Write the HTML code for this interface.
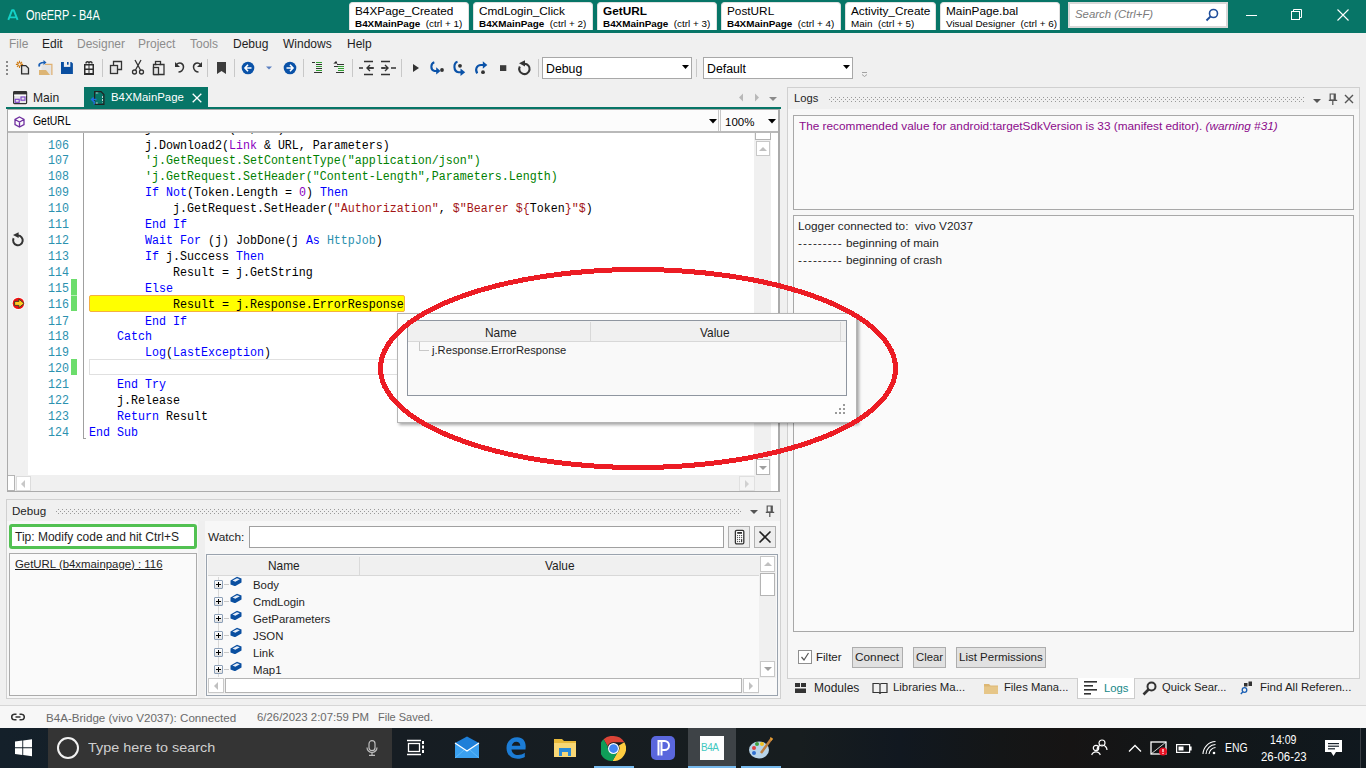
<!DOCTYPE html>
<html><head><meta charset="utf-8">
<style>
*{box-sizing:border-box}
body{margin:0;width:1366px;height:768px;position:relative;overflow:hidden;background:#F0F0F0;font-family:"Liberation Sans",sans-serif;font-size:12px;color:#000}
.a{position:absolute}
.t{position:absolute;white-space:nowrap;line-height:1}
#title{left:0;top:0;width:1366px;height:33px;background:#077567}
.dtab{position:absolute;top:2px;height:28px;background:#fff;border-radius:4px 4px 0 0;border:1px solid #E0E0E0;border-bottom:none}
.dtab .l1{position:absolute;left:5px;top:1.2px;font-size:11.8px;white-space:nowrap;color:#000}
.dtab .l2{position:absolute;left:5px;top:15.2px;font-size:9.9px;white-space:nowrap;color:#000}
.dtab .l2 b{font-weight:bold}
.code{position:absolute;font-family:"Liberation Mono",monospace;font-size:11.667px;white-space:pre;line-height:14.5454px;transform:scaleY(1.1);transform-origin:0 0}
.kw{color:#0000FF}
.cm{color:#008000}
.st{color:#A31515}
.pu{color:#8B00C0}
.ty{color:#2B91AF}
.ln{position:absolute;white-space:pre;left:28px;width:40px;text-align:right;font-family:"Liberation Mono",monospace;font-size:11.667px;line-height:14.5454px;color:#2B91AF;transform:scaleY(1.1);transform-origin:0 0}
</style></head>
<body>
<svg width="0" height="0" style="position:absolute"><defs><pattern id="dots" x="0" y="0" width="4" height="4" patternUnits="userSpaceOnUse"><rect x="2" y="0" width="1" height="1" fill="#9A9A9A"/><rect x="0" y="2" width="1" height="1" fill="#9A9A9A"/></pattern></defs></svg>
<!-- TITLE BAR -->
<div id="title" class="a">
  <svg class="a" style="left:7px;top:9px" width="12" height="12" viewBox="0 0 12 12"><path d="M1.3 10.9L5.1 1.2h1.6l3.9 9.7M3.1 8.4h5.6" fill="none" stroke="#14D2C8" stroke-width="1.9" stroke-linejoin="round"/></svg>
  <div class="t" style="left:26px;top:8.2px;font-size:14px;color:#fff;transform:scaleX(0.785);transform-origin:0 0">OneERP - B4A</div>
  <div class="dtab" style="left:349px;width:120px"><div class="l1">B4XPage_Created</div><div class="l2"><b>B4XMainPage</b>&nbsp; (ctrl + 1)</div></div>
  <div class="dtab" style="left:473px;width:120px"><div class="l1">CmdLogin_Click</div><div class="l2"><b>B4XMainPage</b>&nbsp; (ctrl + 2)</div></div>
  <div class="dtab" style="left:597px;width:120px"><div class="l1" style="font-weight:bold">GetURL</div><div class="l2"><b>B4XMainPage</b>&nbsp; (ctrl + 3)</div></div>
  <div class="dtab" style="left:721px;width:120px"><div class="l1">PostURL</div><div class="l2"><b>B4XMainPage</b>&nbsp; (ctrl + 4)</div></div>
  <div class="dtab" style="left:845px;width:91px"><div class="l1">Activity_Create</div><div class="l2">Main&nbsp; (ctrl + 5)</div></div>
  <div class="dtab" style="left:940px;width:120px"><div class="l1">MainPage.bal</div><div class="l2">Visual Designer&nbsp; (ctrl + 6)</div></div>
  <div class="a" style="left:1068px;top:2px;width:160px;height:26px;background:#fff;border:2px solid #D8D8D8"></div>
  <div class="t" style="left:1075px;top:9px;font-size:11.4px;font-style:italic;color:#7A7A7A">Search (Ctrl+F)</div>
  <svg class="a" style="left:1205px;top:8px" width="14" height="14" viewBox="0 0 14 14"><circle cx="8.5" cy="5.5" r="4" fill="none" stroke="#1F4E9C" stroke-width="1.6"/><line x1="5.6" y1="8.4" x2="1.5" y2="12.5" stroke="#1F4E9C" stroke-width="2"/></svg>
  <div class="a" style="left:1246px;top:15px;width:11px;height:1px;background:#fff"></div>
  <svg class="a" style="left:1291px;top:9px" width="12" height="12" viewBox="0 0 12 12"><rect x="0.5" y="2.5" width="8" height="8" fill="none" stroke="#fff"/><path d="M2.5 2.5V0.5H10.5V8.5H8.5" fill="none" stroke="#fff"/></svg>
  <svg class="a" style="left:1337px;top:9px" width="12" height="12" viewBox="0 0 12 12"><path d="M0.5 0.5L11.5 11.5M11.5 0.5L0.5 11.5" stroke="#fff" stroke-width="1.1"/></svg>
</div>
<!--MENU-->
<div class="t" style="left:9px;top:38px;font-size:12px;color:#8C8C8C">File</div>
<div class="t" style="left:42px;top:38px;font-size:12px;color:#1E1E1E">Edit</div>
<div class="t" style="left:77px;top:38px;font-size:12px;color:#8C8C8C">Designer</div>
<div class="t" style="left:138px;top:38px;font-size:12px;color:#8C8C8C">Project</div>
<div class="t" style="left:190px;top:38px;font-size:12px;color:#8C8C8C">Tools</div>
<div class="t" style="left:233px;top:38px;font-size:12px;color:#1E1E1E">Debug</div>
<div class="t" style="left:283px;top:38px;font-size:12px;color:#1E1E1E">Windows</div>
<div class="t" style="left:347px;top:38px;font-size:12px;color:#1E1E1E">Help</div>
<!--TOOLBAR-->
<svg class="a" style="left:0;top:55px" width="880" height="28" viewBox="0 0 880 28">
 <g fill="#8A8A8A"><rect x="6" y="6" width="2" height="2"/><rect x="6" y="10" width="2" height="2"/><rect x="6" y="14" width="2" height="2"/><rect x="6" y="18" width="2" height="2"/></g>
 <!-- new -->
 <g stroke="#D07A10" stroke-width="1.1"><path d="M19.5 5.8v7.2M15.9 9.4h7.2M17 6.9l5 5M22 6.9l-5 5"/></g><circle cx="19.5" cy="9.4" r="1.6" fill="#F0F0F0" stroke="#D07A10" stroke-width="1"/>
 <path d="M21.6 10.6h4.2l2.7 2.7v5.6h-6.9z" fill="#E6E6E6" stroke="#2E2E2E" stroke-width="1.3"/>
 <!-- open -->
 <path d="M41.5 9h10.5v11H41.5z" fill="#E4E4E4"/><path d="M45 9.3h6.9v10.7" fill="none" stroke="#E0B070" stroke-width="1.2"/>
 <path d="M39 15h7l4 5H39z" fill="#DDB575"/>
 <path d="M39.6 11.5c-1.5-2.5 1-4 4.5-4" fill="none" stroke="#1A5FB4" stroke-width="1.7"/><path d="M43.5 5l3 2.5-3 2.5z" fill="#1A5FB4"/>
 <!-- save -->
 <path d="M61 6.9h10.3l1.6 1.6v10.4H61z" fill="#0A4EA0"/><rect x="63.9" y="6.9" width="6.4" height="5" fill="#F0F0F0"/><rect x="67" y="7" width="1.6" height="2.7" fill="#0A4EA0"/>
 <!-- gift -->
 <path d="M86 8.5c0-2.5 3-2.5 3 0M89 8.5c0-2.5 3-2.5 3 0" fill="none" stroke="#333" stroke-width="1.5"/>
 <rect x="84" y="9" width="10" height="11" fill="#2E2E2E"/><g fill="#F4F4F4"><rect x="85.5" y="10.5" width="3" height="3"/><rect x="89.5" y="10.5" width="3" height="3"/><rect x="85.5" y="15" width="3" height="3"/><rect x="89.5" y="15" width="3" height="3"/></g>
 <rect x="102" y="4" width="1" height="18" fill="#C8C8C8"/>
 <!-- copy -->
 <g fill="none" stroke="#333" stroke-width="1.3"><rect x="110.5" y="10.5" width="7" height="8" fill="#E4E4E4"/><path d="M113.5 10.5v-4h8v8h-4"/></g>
 <!-- cut -->
 <g fill="none" stroke="#333" stroke-width="1.3"><circle cx="134.5" cy="17" r="2"/><circle cx="141.5" cy="17" r="2"/><path d="M135.5 15L141 5M140.5 15L135 5"/></g>
 <!-- paste -->
 <g fill="none" stroke="#333" stroke-width="1.3"><path d="M153.5 19.5v-10h3M159.5 9.5h4.5v10h-10.5"/><rect x="155.5" y="6.5" width="5" height="3"/><rect x="153.5" y="12.5" width="5" height="7" fill="#E4E4E4"/></g>
 <!-- undo/redo -->
 <path d="M176.5 9.5c3-3 7-1 7 2.5s-3 5-5 5" fill="none" stroke="#333" stroke-width="1.5"/><path d="M175 7v5h5z" fill="#333"/>
 <path d="M200.5 9.5c-3-3-7-1-7 2.5s3 5 5 5" fill="none" stroke="#333" stroke-width="1.5"/><path d="M202 7v5h-5z" fill="#333"/>
 <rect x="207" y="4" width="1" height="18" fill="#C8C8C8"/>
 <!-- bookmark -->
 <path d="M217 7h9v12l-4.5-3-4.5 3z" fill="#3C3C3C"/>
 <rect x="234" y="4" width="1" height="18" fill="#C8C8C8"/>
 <!-- back -->
 <circle cx="248" cy="13" r="6.3" fill="#0A52A8"/><path d="M251.5 13h-6M248 9.8l-3 3.2 3 3.2" fill="none" stroke="#fff" stroke-width="1.6"/>
 <path d="M266 11.5h6l-3 3z" fill="#5A7FC0"/>
 <circle cx="290" cy="13" r="6.3" fill="#0A52A8"/><path d="M286.5 13h6M290 9.8l3 3.2-3 3.2" fill="none" stroke="#fff" stroke-width="1.6"/>
 <rect x="303" y="4" width="1" height="18" fill="#C8C8C8"/>
 <!-- comment -->
 <g stroke="#333" stroke-width="1"><path d="M312 7.5h3M316 9.5h6M316 13.5h6M314 17.5h8"/></g><g stroke="#30A030"><path d="M316 7.5h6M316 11.5h6M316 15.5h6"/></g>
 <g stroke="#333" stroke-width="1"><path d="M334 8.5l2-2 1 2M334 11.5h5M337 9.5h7M336 17.5h8"/></g><g stroke="#30A030"><path d="M338 11.5h6M338 13.5h6M338 15.5h6"/></g>
 <rect x="352" y="4" width="1" height="18" fill="#C8C8C8"/>
 <!-- outdent/indent -->
 <g stroke="#333" stroke-width="1.4"><path d="M364 6.5h9M359 13h4M369 13h5M364 19.5h9"/></g><path d="M370 10l-3 3 3 3M367 13h6" fill="none" stroke="#333" stroke-width="1.4"/>
 <g stroke="#333" stroke-width="1.4"><path d="M381 6.5h9M381 13h4M391 13h5M381 19.5h9"/></g><path d="M385 10l3 3-3 3M382 13h6" fill="none" stroke="#333" stroke-width="1.4"/>
 <rect x="401" y="4" width="1" height="18" fill="#C8C8C8"/>
 <!-- play -->
 <path d="M413 9l6 4-6 4z" fill="#333"/>
 <!-- step into -->
 <path d="M434.3 7.3C430.5 8.5 430.2 14.8 434.5 16H438.5" fill="none" stroke="#0A52A8" stroke-width="2.1"/><path d="M436.2 12.3L440.5 16L436.2 19.6z" fill="#0A52A8"/><circle cx="442" cy="15" r="1.9" fill="#333"/>
 <!-- step over -->
 <circle cx="460" cy="10.8" r="1.9" fill="#333"/><path d="M457.5 6.8C453.3 8 453.2 16.3 458.5 17.2H461.5" fill="none" stroke="#0A52A8" stroke-width="2.1"/><path d="M460.5 13.5L465.2 17.2L460.5 21z" fill="#0A52A8"/>
 <!-- step out -->
 <path d="M477.3 18.3C474.8 15 476.5 10 481 10H484" fill="none" stroke="#0A52A8" stroke-width="2.1"/><path d="M482.8 6.3L487.3 10L482.8 13.7z" fill="#0A52A8"/><circle cx="483" cy="17.2" r="1.9" fill="#333"/>
 <!-- stop -->
 <rect x="500" y="10.2" width="6.3" height="5.8" fill="#3A3A3A"/>
 <!-- restart -->
 <path d="M524.5 8.7A5.2 5.2 0 1 1 519.8 11.5" fill="none" stroke="#333" stroke-width="2.1"/><path d="M519 8.3L525 5.3V11.4z" fill="#333"/>
 <rect x="538" y="4" width="1" height="18" fill="#C8C8C8"/>
 <rect x="696" y="4" width="1" height="18" fill="#C8C8C8"/>
 <path d="M862 17.5h5M862 19.5l2.5 2 2.5-2" fill="none" stroke="#999" stroke-width="0.9"/>
</svg>
<div class="a" style="left:542px;top:57px;width:150px;height:22px;background:#fff;border:1px solid #A8A8A8"></div>
<div class="t" style="left:546px;top:62.5px;font-size:12.3px;color:#000">Debug</div>
<svg class="a" style="left:682px;top:65px" width="7" height="4"><path d="M0 0h7l-3.5 4z" fill="#000"/></svg>
<div class="a" style="left:703px;top:57px;width:150px;height:22px;background:#fff;border:1px solid #A8A8A8"></div>
<div class="t" style="left:707px;top:62.5px;font-size:12.3px;color:#000">Default</div>
<svg class="a" style="left:843px;top:65px" width="7" height="4"><path d="M0 0h7l-3.5 4z" fill="#000"/></svg>
<!--DOCTABS-->
<svg class="a" style="left:13px;top:91px" width="15" height="14" viewBox="0 0 15 14"><rect x="0.6" y="0.6" width="13" height="12" rx="0.8" fill="#E8E8E8" stroke="#333" stroke-width="1.2"/><rect x="1" y="1" width="12.2" height="2.6" fill="#333"/><rect x="1.2" y="3.6" width="12" height="1.2" fill="#fff"/><rect x="2.2" y="8.3" width="4" height="3" fill="none" stroke="#7A3EC8" stroke-width="1.1"/><rect x="8" y="6" width="4" height="3.2" fill="none" stroke="#7A3EC8" stroke-width="1.1"/></svg>
<div class="t" style="left:33px;top:92px;font-size:12.1px;color:#1E1E1E">Main</div>
<div class="a" style="left:84px;top:87px;width:124px;height:21px;background:#077567"></div>
<svg class="a" style="left:90px;top:91px" width="16" height="15" viewBox="0 0 16 15"><path d="M4.6 0.6h6.4l2.9 2.9v9.9H4.6z" fill="none" stroke="#222" stroke-width="1.2"/><path d="M5.8 2H9M12.5 5v6.5M5.8 12H8" fill="none" stroke="#CFE0DC" stroke-width="0.9" stroke-dasharray="2 1"/><path d="M6.5 8.5H1.8M3.6 6.5L1.5 8.5 3.6 10.5M4.2 10v3.5" fill="none" stroke="#1E6FE0" stroke-width="1.4"/></svg>
<div class="t" style="left:111px;top:92px;font-size:11.4px;color:#fff">B4XMainPage</div>
<svg class="a" style="left:192px;top:93px" width="10" height="10" viewBox="0 0 10 10"><path d="M0.7 0.7L9.3 9.3M9.3 0.7L0.7 9.3" stroke="#fff" stroke-width="1.3"/></svg>
<svg class="a" style="left:738px;top:92px" width="42" height="12" viewBox="0 0 42 12"><path d="M5 1.5v8l-4-4z" fill="#B8B8B8"/><path d="M17 1.5v8l4-4z" fill="#B8B8B8"/><path d="M31 5h8l-4 4z" fill="#8A8A8A"/></svg>
<div class="a" style="left:6px;top:107px;width:775px;height:2px;background:#077567"></div>
<!--EDITOR-->
<div class="a" style="left:7px;top:109px;width:773px;height:383px;background:#fff;border:1px solid #ABABAB;border-width:1px 2px 1px 1px;overflow:hidden">
 <div class="a" style="left:0;top:0;width:771px;height:23px;background:#FCFCFC;border-bottom:2px solid #B9B9B9"></div>
 <div class="a" style="left:710px;top:0;width:1px;height:21px;background:#C8C8C8"></div><div class="a" style="left:712px;top:0;width:1px;height:21px;background:#C8C8C8"></div>
 <svg class="a" style="left:6px;top:6px" width="11" height="12" viewBox="0 0 11 12"><path d="M5.5 1L10 3.5v5L5.5 11 1 8.5v-5z M1 3.5l4.5 2.5 4.5-2.5 M5.5 6v5" fill="none" stroke="#7030A0" stroke-width="1.3"/></svg>
 <div class="t" style="left:25px;top:4.8px;font-size:12px;transform:scaleX(0.87);transform-origin:0 0;color:#000">GetURL</div>
 <svg class="a" style="left:701px;top:9px" width="8" height="5"><path d="M0 0h8l-4 4.5z" fill="#000"/></svg>
 <div class="t" style="left:717px;top:7px;font-size:11.5px;color:#000">100%</div>
 <svg class="a" style="left:760px;top:9px" width="8" height="5"><path d="M0 0h8l-4 4.5z" fill="#000"/></svg>
 <div class="a" style="left:0;top:23px;width:771px;height:342px;overflow:hidden">
  <div class="a" style="left:0;top:0;width:20px;height:342px;background:#F0F0F0"></div>
  <div class="a" style="left:75px;top:0;width:1px;height:306px;background:#A0A0A0"></div>
  <div class="a" style="left:75px;top:305px;width:3px;height:1px;background:#A0A0A0"></div>
  <div class="a" style="left:63px;top:146px;width:6px;height:32px;background:#6CDD6C"></div>
  <div class="a" style="left:63px;top:162px;width:6px;height:1px;background:#B8F0B8"></div>
  <div class="a" style="left:63px;top:226px;width:6px;height:16px;background:#6CDD6C"></div>
  <div class="a" style="left:81px;top:162px;width:316px;height:17px;background:#FFFF00;border:1px solid #F5B040;border-radius:2px"></div>
  <div class="a" style="left:81px;top:226px;width:664px;height:16px;border:1px solid #E0E0E0"></div>
  <div class="ln" style="left:0;width:61px;top:-12px">105
106
107
108
109
110
111
112
113
114
115
116
117
118
119
120
121
122
123
124</div>
  <div class="code" style="left:81px;top:-12px">        j.Initialize("", Me)
        j.Download2(<span class="pu">Link</span> &amp; URL, Parameters)
        <span class="cm">'j.GetRequest.SetContentType("application/json")</span>
        <span class="cm">'j.GetRequest.SetHeader("Content-Length",Parameters.Length)</span>
        <span class="kw">If</span> <span class="kw">Not</span>(Token.Length = <span class="pu">0</span>) <span class="kw">Then</span>
            j.GetRequest.SetHeader(<span class="st">"Authorization"</span>, <span class="st">$"Bearer ${</span>Token<span class="st">}"$</span>)
        <span class="kw">End If</span>
        <span class="kw">Wait For</span> (j) JobDone(j <span class="kw">As</span> <span class="ty">HttpJob</span>)
        <span class="kw">If</span> j.Success <span class="kw">Then</span>
            Result = j.GetString
        <span class="kw">Else</span>
            Result = j.Response.ErrorResponse
        <span class="kw">End If</span>
    <span class="kw">Catch</span>
        <span class="kw">Log</span>(<span class="kw">LastException</span>)

    <span class="kw">End Try</span>
    j.Release
    <span class="kw">Return</span> Result
<span class="kw">End Sub</span></div>
  <svg class="a" style="left:3px;top:99px" width="14" height="15" viewBox="0 0 14 15"><path d="M7 3.6A4.8 4.8 0 1 1 2.6 6.3" fill="none" stroke="#333" stroke-width="2"/><path d="M2 3.1L7.6 0.2V6z" fill="#333"/></svg>
  <svg class="a" style="left:4px;top:163px" width="15" height="15" viewBox="0 0 15 15"><circle cx="6.4" cy="7.4" r="6.4" fill="#FFFFFF"/><circle cx="6.4" cy="7.4" r="5.7" fill="#EE1111"/><path d="M2.6 5.4h4.3v-2.3l5.2 4.3-5.2 4.3v-2.3H2.6z" fill="#FFCC22" stroke="#3A3A2A" stroke-width="0.9"/></svg>
  <div class="a" style="left:746px;top:0;width:17px;height:342px;background:#F0F0F0"></div>
  <div class="a" style="left:747px;top:0;width:16px;height:7px;background:#fff;border:1px solid #B4B4B4;border-top:none"></div>
  <div class="a" style="left:748px;top:8px;width:14px;height:15px;background:#fff;border:1px solid #C8C8C8"></div>
  <svg class="a" style="left:750px;top:13px" width="10" height="6"><path d="M1 5h8l-4-4z" fill="#C0C0C0"/></svg>
  <div class="a" style="left:748px;top:326px;width:14px;height:16px;background:#fff;border:1px solid #B4B4B4"></div>
  <svg class="a" style="left:750px;top:332px" width="10" height="6"><path d="M1 1h8l-4 4z" fill="#A0A0A0"/></svg>
 </div>
 <div class="a" style="left:0;top:365px;width:763px;height:16px;background:#F0F0F0"></div>
 <div class="a" style="left:0;top:365px;width:7px;height:16px;background:#fff;border:1px solid #B4B4B4;border-left:none"></div>
 <div class="a" style="left:8px;top:366px;width:15px;height:15px;background:#fff;border:1px solid #DCDCDC"></div>
 <svg class="a" style="left:12px;top:370px" width="6" height="8"><path d="M5 0v8l-4-4z" fill="#C8C8C8"/></svg>
 <div class="a" style="left:731px;top:366px;width:16px;height:15px;background:#F4F4F4;border:1px solid #E0E0E0"></div>
 <svg class="a" style="left:736px;top:370px" width="6" height="8"><path d="M1 0v8l4-4z" fill="#D0D0D0"/></svg>
</div>
<!--DEBUG-->
<div class="a" style="left:6px;top:499px;width:775px;height:200px;background:#F7F7F7;border:1px solid #D0D0D0"></div>
<div class="a" style="left:7px;top:500px;width:773px;height:21px;background:#F0F0F0"></div>
<div class="t" style="left:12px;top:505px;font-size:11.6px;color:#1E1E1E">Debug</div>
<svg class="a" style="left:0;top:509px" width="742" height="5"><rect x="56" y="0" width="686" height="5" fill="url(#dots)"/></svg>
<svg class="a" style="left:749px;top:509px" width="10" height="6"><path d="M1 1h8l-4 4z" fill="#555"/></svg>
<svg class="a" style="left:765px;top:505px" width="10" height="13" viewBox="0 0 10 13"><path d="M2.2 1h5v6h-5z" fill="none" stroke="#555" stroke-width="1.2"/><rect x="5.6" y="1" width="1.8" height="6" fill="#555"/><path d="M0.8 7.3h8.4M4.8 7.3v4.6" fill="none" stroke="#555" stroke-width="1.2"/></svg>
<div class="a" style="left:198px;top:521px;width:7px;height:177px;background:#EFEFEF"></div>
<div class="a" style="left:9px;top:524px;width:188px;height:25px;background:#fff;border:3px solid #52C152;border-radius:3px"></div>
<div class="t" style="left:15px;top:531px;font-size:12px;color:#1E1E1E">Tip: Modify code and hit Ctrl+S</div>
<div class="a" style="left:9px;top:553px;width:188px;height:143px;background:#FAFAFA;border:1px solid #ABABAB"></div>
<div class="t" style="left:15px;top:559px;font-size:11.4px;color:#1E1E1E;text-decoration:underline">GetURL (b4xmainpage) : 116</div>
<div class="t" style="left:208px;top:532px;font-size:11.8px;color:#1E1E1E">Watch:</div>
<div class="a" style="left:249px;top:526px;width:475px;height:22px;background:#fff;border:1px solid #A0A0A0"></div>
<div class="a" style="left:728px;top:526px;width:22px;height:22px;background:#EDEDED;border:1px solid #B0B0B0"></div>
<svg class="a" style="left:734px;top:529px" width="11" height="16" viewBox="0 0 11 16"><rect x="1.4" y="1.4" width="8.4" height="13.4" rx="1.2" fill="#fff" stroke="#333" stroke-width="1.3"/><rect x="3.2" y="3" width="4.8" height="1.8" fill="#333"/><g fill="#333"><circle cx="3.6" cy="6.6" r="0.6"/><circle cx="5.6" cy="6.6" r="0.6"/><circle cx="7.6" cy="6.6" r="0.6"/><circle cx="3.6" cy="8.6" r="0.6"/><circle cx="5.6" cy="8.6" r="0.6"/><circle cx="7.6" cy="8.6" r="0.6"/><circle cx="3.6" cy="10.6" r="0.6"/><circle cx="5.6" cy="10.6" r="0.6"/><circle cx="3.6" cy="12.6" r="0.6"/><circle cx="5.6" cy="12.6" r="0.6"/><rect x="7" y="10" width="1.2" height="3.2" rx="0.5"/></g></svg>
<div class="a" style="left:754px;top:526px;width:22px;height:22px;background:#EDEDED;border:1px solid #B0B0B0"></div>
<svg class="a" style="left:758px;top:530px" width="14" height="14" viewBox="0 0 14 14"><path d="M1.5 1.5L12.5 12.5M12.5 1.5L1.5 12.5" stroke="#222" stroke-width="1.6"/></svg>
<div class="a" style="left:206px;top:554px;width:572px;height:142px;background:#F9F9F9;border:1px solid #9AA3AE"></div>
<div class="a" style="left:208px;top:556px;width:551px;height:20px;background:#F0F0F0;border-bottom:1px solid #D8D8D8"></div>
<div class="a" style="left:359px;top:557px;width:1px;height:18px;background:#DADADA"></div>
<div class="t" style="left:268px;top:561px;font-size:11.9px;color:#1E1E1E">Name</div>
<div class="t" style="left:545px;top:561px;font-size:11.9px;color:#1E1E1E">Value</div>
<div class="a" style="left:218px;top:577px;width:1px;height:100px;background:#D8D8D8"></div>
<div class="a" style="left:214px;top:580px;width:9px;height:9px;background:linear-gradient(#fff,#E0E0E0);border:1px solid #8DA0B8;border-radius:1px"></div><div class="a" style="left:216px;top:584px;width:5px;height:1px;background:#000"></div><div class="a" style="left:218px;top:582px;width:1px;height:5px;background:#000"></div><div class="a" style="left:224px;top:584px;width:5px;height:1px;background:#C8C8C8"></div><svg class="a" style="left:230px;top:576px" width="12" height="10" viewBox="0 0 12 10"><path d="M0.5 4.5L7 0.8L11.5 2.5v4L5 10.2L0.5 8.5z" fill="#0A4FA0"/><path d="M2.5 4.6L7 2.2L9.8 3.2L5.3 5.7z" fill="#E8EEF8"/></svg><div class="t" style="left:253px;top:580.00px;font-size:11.4px;color:#1E1E1E">Body</div><div class="a" style="left:214px;top:597px;width:9px;height:9px;background:linear-gradient(#fff,#E0E0E0);border:1px solid #8DA0B8;border-radius:1px"></div><div class="a" style="left:216px;top:601px;width:5px;height:1px;background:#000"></div><div class="a" style="left:218px;top:599px;width:1px;height:5px;background:#000"></div><div class="a" style="left:224px;top:601px;width:5px;height:1px;background:#C8C8C8"></div><svg class="a" style="left:230px;top:593px" width="12" height="10" viewBox="0 0 12 10"><path d="M0.5 4.5L7 0.8L11.5 2.5v4L5 10.2L0.5 8.5z" fill="#0A4FA0"/><path d="M2.5 4.6L7 2.2L9.8 3.2L5.3 5.7z" fill="#E8EEF8"/></svg><div class="t" style="left:253px;top:597.00px;font-size:11.4px;color:#1E1E1E">CmdLogin</div><div class="a" style="left:214px;top:614px;width:9px;height:9px;background:linear-gradient(#fff,#E0E0E0);border:1px solid #8DA0B8;border-radius:1px"></div><div class="a" style="left:216px;top:618px;width:5px;height:1px;background:#000"></div><div class="a" style="left:218px;top:616px;width:1px;height:5px;background:#000"></div><div class="a" style="left:224px;top:618px;width:5px;height:1px;background:#C8C8C8"></div><svg class="a" style="left:230px;top:610px" width="12" height="10" viewBox="0 0 12 10"><path d="M0.5 4.5L7 0.8L11.5 2.5v4L5 10.2L0.5 8.5z" fill="#0A4FA0"/><path d="M2.5 4.6L7 2.2L9.8 3.2L5.3 5.7z" fill="#E8EEF8"/></svg><div class="t" style="left:253px;top:614.00px;font-size:11.4px;color:#1E1E1E">GetParameters</div><div class="a" style="left:214px;top:631px;width:9px;height:9px;background:linear-gradient(#fff,#E0E0E0);border:1px solid #8DA0B8;border-radius:1px"></div><div class="a" style="left:216px;top:635px;width:5px;height:1px;background:#000"></div><div class="a" style="left:218px;top:633px;width:1px;height:5px;background:#000"></div><div class="a" style="left:224px;top:635px;width:5px;height:1px;background:#C8C8C8"></div><svg class="a" style="left:230px;top:627px" width="12" height="10" viewBox="0 0 12 10"><path d="M0.5 4.5L7 0.8L11.5 2.5v4L5 10.2L0.5 8.5z" fill="#0A4FA0"/><path d="M2.5 4.6L7 2.2L9.8 3.2L5.3 5.7z" fill="#E8EEF8"/></svg><div class="t" style="left:253px;top:631.00px;font-size:11.4px;color:#1E1E1E">JSON</div><div class="a" style="left:214px;top:648px;width:9px;height:9px;background:linear-gradient(#fff,#E0E0E0);border:1px solid #8DA0B8;border-radius:1px"></div><div class="a" style="left:216px;top:652px;width:5px;height:1px;background:#000"></div><div class="a" style="left:218px;top:650px;width:1px;height:5px;background:#000"></div><div class="a" style="left:224px;top:652px;width:5px;height:1px;background:#C8C8C8"></div><svg class="a" style="left:230px;top:644px" width="12" height="10" viewBox="0 0 12 10"><path d="M0.5 4.5L7 0.8L11.5 2.5v4L5 10.2L0.5 8.5z" fill="#0A4FA0"/><path d="M2.5 4.6L7 2.2L9.8 3.2L5.3 5.7z" fill="#E8EEF8"/></svg><div class="t" style="left:253px;top:648.00px;font-size:11.4px;color:#1E1E1E">Link</div><div class="a" style="left:214px;top:665px;width:9px;height:9px;background:linear-gradient(#fff,#E0E0E0);border:1px solid #8DA0B8;border-radius:1px"></div><div class="a" style="left:216px;top:669px;width:5px;height:1px;background:#000"></div><div class="a" style="left:218px;top:667px;width:1px;height:5px;background:#000"></div><div class="a" style="left:224px;top:669px;width:5px;height:1px;background:#C8C8C8"></div><svg class="a" style="left:230px;top:661px" width="12" height="10" viewBox="0 0 12 10"><path d="M0.5 4.5L7 0.8L11.5 2.5v4L5 10.2L0.5 8.5z" fill="#0A4FA0"/><path d="M2.5 4.6L7 2.2L9.8 3.2L5.3 5.7z" fill="#E8EEF8"/></svg><div class="t" style="left:253px;top:665.00px;font-size:11.4px;color:#1E1E1E">Map1</div>
<div class="a" style="left:759px;top:556px;width:17px;height:122px;background:#F0F0F0"></div>
<div class="a" style="left:760px;top:556px;width:15px;height:16px;background:#fff;border:1px solid #C8C8C8"></div>
<svg class="a" style="left:763px;top:561px" width="10" height="6"><path d="M1 5h8l-4-4z" fill="#C0C0C0"/></svg>
<div class="a" style="left:760px;top:573px;width:15px;height:23px;background:#fff;border:1px solid #B4B4B4"></div>
<div class="a" style="left:760px;top:661px;width:15px;height:16px;background:#fff;border:1px solid #C8C8C8"></div>
<svg class="a" style="left:763px;top:666px" width="10" height="6"><path d="M1 1h8l-4 4z" fill="#A0A0A0"/></svg>
<div class="a" style="left:208px;top:678px;width:551px;height:16px;background:#F0F0F0"></div>
<div class="a" style="left:208px;top:678px;width:16px;height:15px;background:#fff;border:1px solid #C8C8C8"></div>
<svg class="a" style="left:213px;top:682px" width="6" height="8"><path d="M5 0v8l-4-4z" fill="#C0C0C0"/></svg>
<div class="a" style="left:225px;top:678px;width:517px;height:15px;background:#fff;border:1px solid #B4B4B4"></div>
<div class="a" style="left:743px;top:678px;width:16px;height:15px;background:#fff;border:1px solid #C8C8C8"></div>
<svg class="a" style="left:748px;top:682px" width="6" height="8"><path d="M1 0v8l4-4z" fill="#C0C0C0"/></svg>
<!--LOGS-->
<div class="a" style="left:787px;top:87px;width:573px;height:592px;background:#F7F7F7;border:1px solid #D0D0D0"></div>
<div class="a" style="left:788px;top:88px;width:571px;height:21px;background:#F0F0F0"></div>
<div class="t" style="left:794px;top:93px;font-size:11.2px;color:#1E1E1E">Logs</div>
<svg class="a" style="left:1px;top:97px" width="1303" height="5"><rect x="827" y="0" width="477" height="5" fill="url(#dots)"/></svg>
<svg class="a" style="left:1312px;top:98px" width="10" height="6"><path d="M1 1h8l-4 4z" fill="#555"/></svg>
<svg class="a" style="left:1328px;top:93px" width="10" height="13" viewBox="0 0 10 13"><path d="M2.2 1h5v6h-5z" fill="none" stroke="#555" stroke-width="1.2"/><rect x="5.6" y="1" width="1.8" height="6" fill="#555"/><path d="M0.8 7.3h8.4M4.8 7.3v4.6" fill="none" stroke="#555" stroke-width="1.2"/></svg>
<svg class="a" style="left:1344px;top:94px" width="10" height="10" viewBox="0 0 10 10"><path d="M1 1L9 9M9 1L1 9" stroke="#555" stroke-width="1.4"/></svg>
<div class="a" style="left:793px;top:115px;width:561px;height:95px;background:#FAFAFA;border:1px solid #A8A8A8"></div>
<div class="t" style="left:799px;top:121px;font-size:11.8px;color:#8B0A8B">The recommended value for android:targetSdkVersion is 33 (manifest editor). <i>(warning #31)</i></div>
<div class="a" style="left:793px;top:215px;width:561px;height:417px;background:#FAFAFA;border:1px solid #A8A8A8"></div>
<div class="t" style="left:798px;top:220px;font-size:11.75px;color:#1E1E1E">Logger connected to:&nbsp; vivo V2037</div>
<div class="t" style="left:798px;top:237px;font-size:11.75px;color:#1E1E1E;letter-spacing:1.05px">---------</div><div class="t" style="left:846px;top:237px;font-size:11.75px;color:#1E1E1E">beginning of main</div>
<div class="t" style="left:798px;top:254px;font-size:11.75px;color:#1E1E1E;letter-spacing:1.05px">---------</div><div class="t" style="left:846px;top:254px;font-size:11.75px;color:#1E1E1E">beginning of crash</div>
<div class="a" style="left:798px;top:650px;width:14px;height:14px;background:#fff;border:1px solid #8F8F8F"></div>
<svg class="a" style="left:800px;top:652px" width="10" height="10" viewBox="0 0 10 10"><path d="M1.5 5l2.5 3 4.5-7" fill="none" stroke="#555" stroke-width="1.2"/></svg>
<div class="t" style="left:816px;top:652px;font-size:11.5px;color:#1E1E1E">Filter</div>
<div class="a" style="left:852px;top:647px;width:51px;height:21px;background:#E1E1E1;border:1px solid #ADADAD"></div>
<div class="t" style="left:855px;top:652px;font-size:11.8px;color:#1E1E1E">Connect</div>
<div class="a" style="left:913px;top:647px;width:33px;height:21px;background:#E1E1E1;border:1px solid #ADADAD"></div>
<div class="t" style="left:916px;top:652px;font-size:11.3px;color:#1E1E1E">Clear</div>
<div class="a" style="left:956px;top:647px;width:90px;height:21px;background:#E1E1E1;border:1px solid #ADADAD"></div>
<div class="t" style="left:959px;top:652px;font-size:11.5px;color:#1E1E1E">List Permissions</div>
<!-- bottom tabs -->
<div class="a" style="left:1077px;top:678px;width:58px;height:21px;background:#fff;border:1px solid #CCCCCC;border-top:none"></div>
<svg class="a" style="left:795px;top:683px" width="12" height="11" viewBox="0 0 12 11"><rect x="0" y="0" width="5" height="4" fill="#333"/><rect x="6" y="0" width="5" height="4" fill="#333"/><rect x="0" y="5.5" width="11" height="4.5" fill="#333"/></svg>
<div class="t" style="left:814px;top:682px;font-size:12px;color:#1E1E1E">Modules</div>
<svg class="a" style="left:872px;top:682px" width="16" height="13" viewBox="0 0 16 13"><path d="M1 1.5h5.5c1 0 1.5 .5 1.5 1.5v9c0-1-.5-1.5-1.5-1.5H1z M15 1.5H9.5c-1 0-1.5 .5-1.5 1.5v9c0-1 .5-1.5 1.5-1.5H15z" fill="none" stroke="#333" stroke-width="1.2"/></svg>
<div class="t" style="left:893px;top:682px;font-size:11.4px;color:#1E1E1E">Libraries Ma...</div>
<svg class="a" style="left:984px;top:682px" width="15" height="12" viewBox="0 0 15 12"><path d="M0 2h5l1.5 1.5H14V12H0z" fill="#DDB774"/><path d="M0 4.5h14V12H0z" fill="#E6C688"/></svg>
<div class="t" style="left:1004px;top:682px;font-size:11.25px;color:#1E1E1E">Files Mana...</div>
<svg class="a" style="left:1084px;top:681px" width="15" height="14" viewBox="0 0 15 14"><g fill="#333"><rect x="0" y="0" width="13" height="1.6"/><rect x="0" y="4" width="9" height="1.6"/><rect x="0" y="8" width="13" height="1.6"/><rect x="0" y="12" width="7" height="1.6"/></g></svg>
<div class="t" style="left:1104px;top:683px;font-size:11.3px;color:#168888">Logs</div>
<svg class="a" style="left:1142px;top:681px" width="15" height="15" viewBox="0 0 15 15"><circle cx="9.5" cy="5.5" r="4" fill="none" stroke="#333" stroke-width="2"/><path d="M7 8L1.5 13.5" stroke="#333" stroke-width="2.6"/></svg>
<div class="t" style="left:1162px;top:682px;font-size:11.25px;color:#1E1E1E">Quick Sear...</div>
<svg class="a" style="left:1240px;top:681px" width="13" height="14" viewBox="0 0 13 14"><rect x="4" y="2" width="3.5" height="3.5" fill="#333"/><rect x="8.5" y="0.5" width="3.5" height="4.5" fill="#333"/><circle cx="4.5" cy="9" r="2.3" fill="none" stroke="#1A5FB4" stroke-width="1.3"/><path d="M3 10.7L0.8 13" stroke="#1A5FB4" stroke-width="1.4"/></svg>
<div class="t" style="left:1260px;top:682px;font-size:11.5px;color:#1E1E1E">Find All Referen...</div>
<!--STATUS-->
<div class="a" style="left:0;top:705px;width:1366px;height:23px;background:#F7F7F7;border-top:1px solid #D6D6D6"></div>
<svg class="a" style="left:11px;top:713px" width="14" height="8" viewBox="0 0 14 8"><path d="M5.5 1.2H3.5a2.8 2.8 0 0 0 0 5.6h2 M8.5 1.2h2a2.8 2.8 0 0 1 0 5.6h-2 M4.5 4h5" fill="none" stroke="#333" stroke-width="1.6"/></svg>
<div class="t" style="left:46px;top:712px;font-size:11.6px;color:#6A6A6A">B4A-Bridge (vivo V2037): Connected</div>
<div class="t" style="left:257px;top:712px;font-size:11.4px;color:#6A6A6A">6/26/2023 2:07:59 PM</div>
<div class="t" style="left:378px;top:712px;font-size:11px;color:#6A6A6A">File Saved.</div>
<!--TASKBAR-->
<div class="a" style="left:0;top:728px;width:1366px;height:40px;background:linear-gradient(90deg,#14202A 0px,#161D23 400px,#171D1F 800px,#111820 900px,#141617 1000px,#161414 1070px,#121719 1200px,#10181E 1366px)"></div>
<svg class="a" style="left:15px;top:739px" width="18" height="18" viewBox="0 0 18 18"><g fill="#fff"><path d="M0 2.5L7.3 1.5V8.3H0z"/><path d="M8.2 1.4L17 0.2V8.3H8.2z"/><path d="M0 9.2H7.3V16L0 15z"/><path d="M8.2 9.2H17V17.3L8.2 16.1z"/></g></svg>
<div class="a" style="left:48px;top:728px;width:344px;height:40px;background:#343434"></div>
<div class="a" style="left:57px;top:737px;width:22px;height:22px;border:2.5px solid #F2F2F2;border-radius:50%"></div>
<div class="t" style="left:88px;top:740.5px;font-size:14.4px;color:#CFCFCF;transform:scaleY(0.92);transform-origin:0 0">Type here to search</div>
<svg class="a" style="left:366px;top:740px" width="12" height="16" viewBox="0 0 12 16"><rect x="3" y="0.7" width="6" height="10" rx="3" fill="none" stroke="#BDBDBD" stroke-width="1.2"/><path d="M1 7.5a5 5 0 0 0 10 0M6 12.5v3M3 15.3h6" fill="none" stroke="#BDBDBD" stroke-width="1.2"/></svg>
<svg class="a" style="left:407px;top:739px" width="18" height="17" viewBox="0 0 18 17"><g fill="none" stroke="#fff" stroke-width="1.3"><rect x="1.5" y="4.5" width="11" height="8"/><path d="M0 1.5h14M0 15.5h14"/></g><g fill="#fff"><rect x="15" y="2" width="2" height="3"/><rect x="15" y="6.5" width="2" height="3"/><rect x="15" y="11" width="2" height="3"/></g></svg>
<svg class="a" style="left:454px;top:736px" width="26" height="23" viewBox="0 0 26 23"><path d="M1 7L13 0.5 25 7V22H1z" fill="#1E7FD8"/><path d="M1 7l12 8 12-8v15H1z" fill="#3AA0F0"/><path d="M1 7l12 8 12-8" fill="none" stroke="#fff" stroke-width="1.3"/><path d="M1 22l9-8M25 22l-9-8" stroke="#5DB8F8" stroke-width="1"/></svg>
<svg class="a" style="left:505px;top:737px" width="22" height="22" viewBox="0 0 22 22"><path d="M20.5 12.5H6.5c0.3 3.5 3 5.5 6.5 5.5 2.5 0 4.8-0.8 6.8-2.2v4.2c-2 1.2-4.5 1.8-7.3 1.8C6 21.8 1.5 17.5 1.5 11 1.5 4.8 6 0.2 12.2 0.2c5.5 0 8.5 3.8 8.5 9.3zM6.8 8.8h8.5c-0.1-2.5-1.7-4-4.1-4-2.4 0-4 1.7-4.4 4z" fill="#1C7CD5"/></svg>
<svg class="a" style="left:554px;top:738px" width="22" height="19" viewBox="0 0 22 19"><path d="M0 1h8l2 2h12v16H0z" fill="#E8B93A"/><path d="M0 5h22v14H0z" fill="#F8D775"/><path d="M5 10h12v8h-3v-4H8v4H5z" fill="#2A8AD8"/></svg>
<svg class="a" style="left:601px;top:736px" width="25" height="25" viewBox="0 0 24 24"><path d="M12 0A12 12 0 0 1 22.4 6H12a6 6 0 0 0-5.6 3.9L2.5 3.2A12 12 0 0 1 12 0z" fill="#DB4437"/><path d="M22.4 6A12 12 0 0 1 11 24l4.6-7.9A6 6 0 0 0 17.2 9z" fill="#FFCD40" /><path d="M11 24A12 12 0 0 1 2.5 3.2l4 6.8A6 6 0 0 0 15.6 16.1z" fill="#0F9D58"/><circle cx="12" cy="12" r="5.3" fill="#fff"/><circle cx="12" cy="12" r="4.2" fill="#4285F4"/></svg>
<div class="a" style="left:594px;top:766px;width:40px;height:2px;background:#76B9ED"></div>
<div class="a" style="left:651px;top:736px;width:24px;height:24px;background:#5A67DD;border-radius:5px"></div>
<svg class="a" style="left:651px;top:736px" width="24" height="24" viewBox="0 0 24 24"><path d="M7.5 19.5V5h6a4.5 4.5 0 0 1 0 9H10.5M10.5 5v14.5" fill="none" stroke="#fff" stroke-width="2"/></svg>
<div class="a" style="left:688px;top:728px;width:48px;height:40px;background:#3E4347"></div>
<div class="a" style="left:700px;top:736px;width:24px;height:24px;background:#FDFDFD"></div>
<div class="t" style="left:701px;top:743px;font-size:10px;color:#41C8C0;letter-spacing:-0.5px">B4A</div>
<div class="a" style="left:688px;top:766px;width:48px;height:2px;background:#76B9ED"></div>
<svg class="a" style="left:748px;top:736px" width="26" height="24" viewBox="0 0 26 24"><ellipse cx="11" cy="14" rx="10" ry="8.5" fill="#B8D4E8"/><circle cx="6" cy="12" r="2" fill="#E04040"/><circle cx="9" cy="8" r="2" fill="#40A040"/><circle cx="14" cy="8" r="2" fill="#F0C020"/><circle cx="6" cy="17" r="2" fill="#3070D0"/><path d="M13 17L24 2" stroke="#C08040" stroke-width="2.5"/><path d="M22 1l3 2-2 2z" fill="#E8A030"/></svg>
<div class="a" style="left:741px;top:766px;width:40px;height:2px;background:#76B9ED"></div>
<svg class="a" style="left:1091px;top:739px" width="17" height="17" viewBox="0 0 17 17"><g fill="none" stroke="#fff" stroke-width="1.2"><circle cx="11" cy="4" r="3"/><path d="M6 11a5 5 0 0 1 10 0"/><circle cx="5" cy="9" r="2.7"/><path d="M0.7 16a4.5 4.5 0 0 1 8.6 0"/></g></svg>
<svg class="a" style="left:1128px;top:744px" width="14" height="8" viewBox="0 0 14 8"><path d="M1 7.5L7 1.5l6 6" fill="none" stroke="#fff" stroke-width="1.3"/></svg>
<svg class="a" style="left:1150px;top:740px" width="18" height="16" viewBox="0 0 18 16"><rect x="1" y="2" width="15" height="12" fill="none" stroke="#fff" stroke-width="1.3"/><path d="M1 14L16 2" stroke="#fff" stroke-width="0.8"/><circle cx="13" cy="11.5" r="4" fill="#E81123"/><rect x="12.4" y="9" width="1.2" height="3" fill="#fff"/><rect x="12.4" y="12.8" width="1.2" height="1.2" fill="#fff"/></svg>
<svg class="a" style="left:1176px;top:744px" width="16" height="9" viewBox="0 0 16 9"><rect x="0.6" y="0.6" width="13" height="7.8" fill="none" stroke="#fff" stroke-width="1.2"/><rect x="2.5" y="2.5" width="5" height="4" fill="#fff"/><rect x="14" y="2.5" width="1.6" height="4" fill="#fff"/></svg>
<svg class="a" style="left:1202px;top:740px" width="14" height="15" viewBox="0 0 14 15"><g fill="none" stroke="#fff" stroke-width="1.1"><path d="M1 14A13 13 0 0 1 13.5 1.5"/><path d="M4 14A10 10 0 0 1 13.5 4.5"/><path d="M7 14A7 7 0 0 1 13.5 7.5"/></g><circle cx="12" cy="13" r="1.3" fill="#fff"/></svg>
<div class="t" style="left:1225px;top:742px;font-size:10.4px;color:#fff;transform:scaleY(1.2);transform-origin:0 0">ENG</div>
<div class="t" style="left:1270px;top:734px;font-size:10.6px;color:#fff;transform:scaleY(1.15);transform-origin:0 0">14:09</div>
<div class="t" style="left:1261px;top:751px;font-size:11.4px;color:#fff;transform:scaleY(1.1);transform-origin:0 0">26-06-23</div>
<svg class="a" style="left:1325px;top:740px" width="17" height="17" viewBox="0 0 17 17"><path d="M0 0h17v12H11l-2.5 4-2.5-4H0z" fill="#fff"/><g fill="#18222B"><rect x="3" y="3" width="11" height="1.2"/><rect x="3" y="5.6" width="11" height="1.2"/><rect x="3" y="8.2" width="7" height="1.2"/></g></svg>
<div class="a" style="left:1360px;top:728px;width:1px;height:40px;background:#3A3F44"></div>
<!--POPUP-->
<div class="a" style="left:397px;top:313px;width:460px;height:110px;background:#FDFDFD;border:1px solid #B4B4B4;box-shadow:2px 2px 3px rgba(0,0,0,0.35)"></div>
<div class="a" style="left:407px;top:320px;width:440px;height:76px;background:#F9F9F9;border:1px solid #8F96A0"></div>
<div class="a" style="left:408px;top:321px;width:438px;height:21px;background:#F0F0F0;border-bottom:1px solid #D8D8D8"></div>
<div class="a" style="left:590px;top:322px;width:1px;height:19px;background:#D8D8D8"></div>
<div class="a" style="left:840px;top:322px;width:1px;height:19px;background:#D8D8D8"></div>
<div class="t" style="left:485px;top:327.5px;font-size:11.9px;color:#1E1E1E">Name</div>
<div class="t" style="left:700px;top:327.5px;font-size:11.9px;color:#1E1E1E">Value</div>
<div class="a" style="left:419px;top:342px;width:1px;height:9px;background:#C8C8C8"></div>
<div class="a" style="left:419px;top:350px;width:10px;height:1px;background:#C8C8C8"></div>
<div class="t" style="left:432px;top:344.5px;font-size:11.2px;color:#1E1E1E">j.Response.ErrorResponse</div>
<svg class="a" style="left:834px;top:403px" width="13" height="12" viewBox="0 0 13 12"><g fill="#9A9A9A"><rect x="9" y="1" width="2" height="2"/><rect x="5" y="5" width="2" height="2"/><rect x="9" y="5" width="2" height="2"/><rect x="1" y="9" width="2" height="2"/><rect x="5" y="9" width="2" height="2"/><rect x="9" y="9" width="2" height="2"/></g></svg>
<svg class="a" style="left:0;top:0;pointer-events:none" width="1366" height="768"><ellipse cx="638" cy="368.5" rx="257.5" ry="99" fill="none" stroke="#EC1C24" stroke-width="5" shape-rendering="crispEdges"/></svg>
</body></html>
